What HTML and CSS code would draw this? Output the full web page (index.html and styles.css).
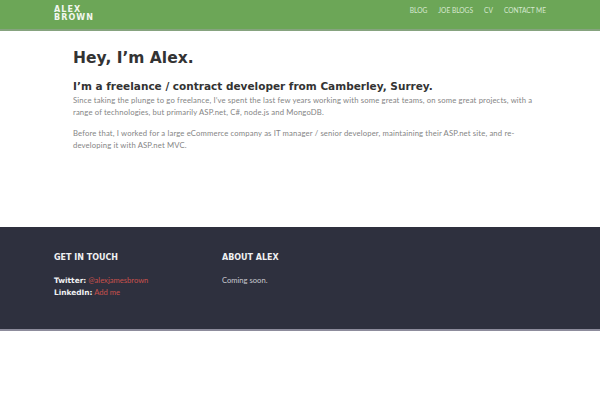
FILE: index.html
```html
<!DOCTYPE html>
<html lang="en">
<head>
    <meta charset="UTF-8">
    <title>Alex Brown</title>
    <meta name="viewport" content="width=device-width, initial-scale=1">
    <link rel="stylesheet" href="styles.css">
</head>
<body>
    <header class="topbar">
        <div class="wrap topbar-inner">
            <a class="logo" href="#">Alex<br>Brown</a>
            <nav class="nav-links">
                <a href="#">Blog</a>
                <a href="#">Joe Blogs</a>
                <a href="#">CV</a>
                <a href="#">Contact me</a>
            </nav>
        </div>
    </header>

    <main class="wrap main-content">
        <h1>Hey, I’m Alex.</h1>
        <h2>I’m a freelance / contract developer from Camberley, Surrey.</h2>
        <p>Since taking the plunge to go freelance, I’ve spent the last few years working with some great teams, on some great projects, with a range of technologies, but primarily ASP.net, C#, node.js and MongoDB.</p>
        <p>Before that, I worked for a large eCommerce company as IT manager / senior developer, maintaining their ASP.net site, and re-developing it with ASP.net MVC.</p>
    </main>

    <footer class="footer">
        <div class="wrap footer-cols">
            <section class="footer-col">
                <h3>Get in touch</h3>
                <ul>
                    <li><b>Twitter:</b> <a href="#">@alexjamesbrown</a></li>
                    <li><b>LinkedIn:</b> <a href="#">Add me</a></li>
                </ul>
            </section>
            <section class="footer-col">
                <h3>About Alex</h3>
                <p>Coming soon.</p>
            </section>
        </div>
    </footer>
</body>
</html>
```

FILE: styles.css
```css
body {
    margin: 0;
    font-family: 'Lato', 'Open Sans', Arial, sans-serif;
    color: #777;
    background: #fff;
}
.wrap {
    width: 492px;
    margin: 0 auto;
    box-sizing: border-box;
}
.topbar {
    background: #6ca657;
    border-bottom: 2px solid #86a37f;
    height: 29px;
}
.topbar-inner {
    display: flex;
    align-items: flex-start;
    justify-content: space-between;
    height: 100%;
}
.topbar .logo {
    display: block;
    margin-top: 6px;
    font-family: 'DejaVu Sans', Verdana, sans-serif;
    font-size: 8px;
    line-height: 7.5px;
    font-weight: 700;
    letter-spacing: 1.1px;
    text-transform: uppercase;
    color: #f2f7ef;
    text-decoration: none;
}
.nav-links {
    display: flex;
    gap: 11px;
    margin-top: 7px;
}
.nav-links a {
    font-size: 6.6px;
    line-height: 7px;
    text-transform: uppercase;
    color: #d7e8d0;
    text-decoration: none;
}
.main-content {
    padding: 18px 0 0 19px;
    height: 196px;
}
h1 {
    margin: 0 0 12px 0;
    font-family: 'DejaVu Sans', Verdana, sans-serif;
    font-size: 15.5px;
    line-height: 19px;
    font-weight: 700;
    color: #333;
}
h2 {
    margin: 0 0 1px 0;
    font-family: 'DejaVu Sans', Verdana, sans-serif;
    font-size: 10.5px;
    line-height: 13px;
    font-weight: 700;
    color: #333;
}
.main-content p {
    max-width: 468px;
    margin: 0 0 9px 0;
    font-size: 7.7px;
    line-height: 12px;
    font-weight: 400;
    letter-spacing: 0.15px;
    color: #858585;
}
.footer {
    background: #2e303e;
    border-bottom: 2px solid #8d8c9c;
    height: 102px;
}
.footer-cols {
    display: flex;
    padding-top: 26px;
}
.footer-col {
    width: 168px;
}
.footer h3 {
    margin: 0 0 11px 0;
    font-family: 'DejaVu Sans', Verdana, sans-serif;
    font-size: 8px;
    line-height: 10px;
    font-weight: 700;
    text-transform: uppercase;
    color: #f0f0f2;
}
.footer ul {
    margin: 0;
    padding: 0;
    list-style: none;
}
.footer li, .footer p {
    height: 12px;
    margin: 0;
    font-size: 7.6px;
    line-height: 12px;
    color: #c9c9d0;
}
.footer li b {
    font-family: 'DejaVu Sans', Verdana, sans-serif;
    font-size: 7.4px;
    line-height: 10px;
    color: #f0f0f2;
}
.footer a {
    color: #c9504c;
    text-decoration: none;
}
```
